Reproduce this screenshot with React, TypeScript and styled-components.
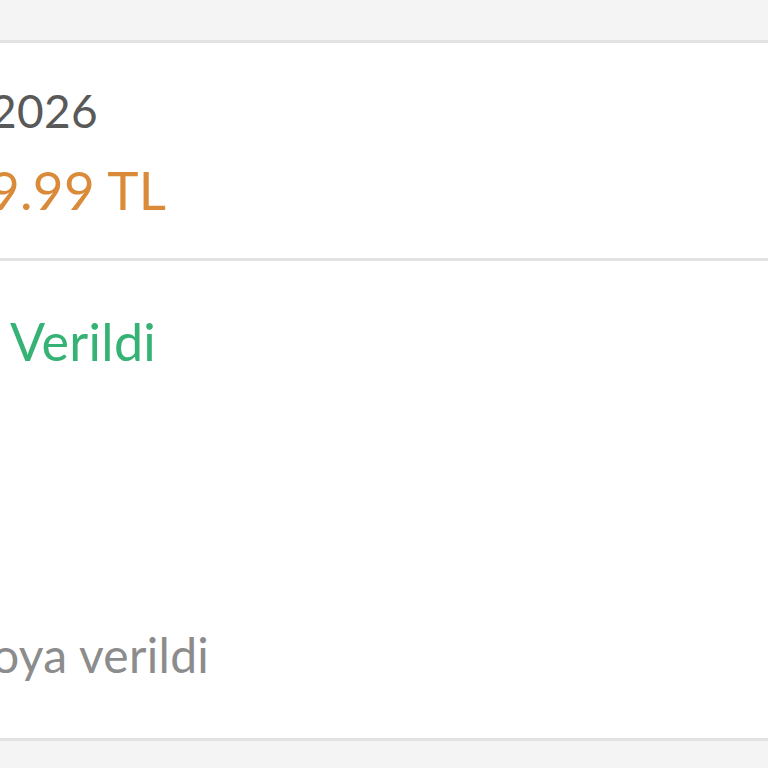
import React from 'react';
import styled, { createGlobalStyle } from 'styled-components';

const GlobalStyle = createGlobalStyle`
  html, body {
    margin: 0;
    padding: 0;
    background: #f4f4f4;
    font-family: Lato, "Open Sans", sans-serif;
    overflow: hidden;
  }
`;

const Screen = styled.div`
  width: 768px;
  height: 768px;
  background: #f4f4f4;
  padding-top: 40px;
  box-sizing: border-box;
  overflow: hidden;
`;

const Card = styled.section`
  background: #ffffff;
  border-top: 3px solid #e2e2e2;
  border-bottom: 3px solid #e2e2e2;
`;

const Block = styled.div<{ $top: number; $bottom: number; $gap: number }>`
  display: flex;
  flex-direction: column;
  gap: ${p => p.$gap}px;
  padding-top: ${p => p.$top}px;
  padding-bottom: ${p => p.$bottom}px;
  overflow: hidden;

  & + & {
    border-top: 3px solid #e2e2e2;
  }
`;

const Line = styled.div<{ $size: number; $color: string; $shift: number }>`
  font-size: ${p => p.$size}px;
  line-height: ${p => Math.round(p.$size * 1.2)}px;
  letter-spacing: 0.3px;
  color: ${p => p.$color};
  white-space: nowrap;
  margin-left: ${p => p.$shift}px;
`;

const Spacer = styled.div<{ $h: number }>`
  height: ${p => p.$h}px;
`;

export default function App() {
  return (
    <>
      <GlobalStyle />
      <Screen>
        <Card>
          <Block $top={40} $bottom={36} $gap={20}>
            <Line $size={46} $color="#595959" $shift={-10}>2026</Line>
            <Line $size={53} $color="#d98b3a" $shift={-11}>9.99 TL</Line>
          </Block>
          <Block $top={49} $bottom={54} $gap={0}>
            <Line $size={52} $color="#36b374" $shift={10}>Verildi</Line>
            <Spacer $h={254} />
            <Line $size={48} $color="#8c8c8c" $shift={-8}>oya verildi</Line>
          </Block>
        </Card>
      </Screen>
    </>
  );
}
